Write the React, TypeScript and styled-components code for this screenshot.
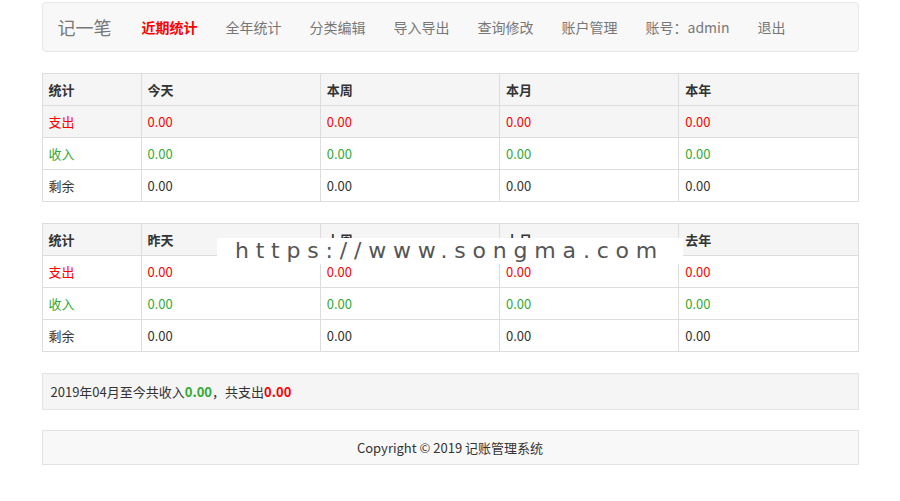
import React from 'react';
import styled, { createGlobalStyle } from 'styled-components';

const GlobalStyle = createGlobalStyle`
  body {
    margin: 0;
    background: #fff;
    font-family: "Noto Sans CJK SC", "Noto Sans", sans-serif;
    font-size: 13px;
    color: #333;
  }
`;

const Page = styled.div`
  position: relative;
  width: 817px;
  margin: 0 auto;
  padding-top: 2px;
  display: flex;
  flex-direction: column;
`;

const NavBar = styled.div`
  height: 48px;
  display: flex;
  align-items: center;
  background: #f8f8f8;
  border: 1px solid #e7e7e7;
  border-radius: 4px;
  padding-left: 15px;
`;

const Brand = styled.span`
  font-size: 18px;
  color: #777;
  margin-right: 16px;
`;

const NavLink = styled.span<{ $active?: boolean }>`
  padding: 0 14px;
  font-size: 14px;
  color: ${(p) => (p.$active ? '#f00' : '#777')};
  font-weight: ${(p) => (p.$active ? 'bold' : 'normal')};
`;

const Table = styled.table`
  width: 100%;
  border-collapse: collapse;
  margin-top: 21px;
  table-layout: fixed;
`;

const Th = styled.th<{ $w?: number }>`
  width: ${(p) => (p.$w ? `${p.$w}px` : 'auto')};
  height: 31px;
  padding: 0 6px;
  text-align: left;
  font-weight: bold;
  border: 1px solid #ddd;
  background: #f5f5f5;
`;

const Tr = styled.tr<{ $grey?: boolean }>`
  background: ${(p) => (p.$grey ? '#f5f5f5' : '#fff')};
`;

const Td = styled.td<{ $color: string }>`
  height: 31px;
  padding: 0 6px;
  border: 1px solid #ddd;
  color: ${(p) => p.$color};
`;

const Summary = styled.div`
  margin-top: 21px;
  height: 35px;
  display: flex;
  align-items: center;
  padding-left: 8px;
  background: #f5f5f5;
  border: 1px solid #e3e3e3;
`;

const Num = styled.b<{ $color: string }>`
  color: ${(p) => p.$color};
`;

const Footer = styled.div`
  margin-top: 20px;
  height: 33px;
  display: flex;
  align-items: center;
  justify-content: center;
  background: #f8f8f8;
  border: 1px solid #e3e3e3;
`;

const Watermark = styled.div`
  position: absolute;
  left: 175px;
  top: 238px;
  width: 466px;
  height: 26px;
  background: #fff;
  color: #555;
  font-family: "DejaVu Sans", sans-serif;
  font-size: 22px;
  letter-spacing: 6.8px;
  line-height: 26px;
  text-align: center;
`;

const rows = [
  { label: '支出', color: '#f00' },
  { label: '收入', color: '#3a3' },
  { label: '剩余', color: '#333' },
];

const StatTable = ({ heads, greyFirst }: { heads: string[]; greyFirst?: boolean }) => (
  <Table>
    <thead>
      <tr>
        <Th $w={86}>统计</Th>
        {heads.map((h) => <Th key={h}>{h}</Th>)}
      </tr>
    </thead>
    <tbody>
      {rows.map((r, i) => (
        <Tr key={r.label} $grey={greyFirst && i === 0}>
          <Td $color={r.color}>{r.label}</Td>
          {heads.map((h) => <Td key={h} $color={r.color}>0.00</Td>)}
        </Tr>
      ))}
    </tbody>
  </Table>
);

const App = () => (
  <Page>
    <GlobalStyle />
    <NavBar>
      <Brand>记一笔</Brand>
      <NavLink $active>近期统计</NavLink>
      <NavLink>全年统计</NavLink>
      <NavLink>分类编辑</NavLink>
      <NavLink>导入导出</NavLink>
      <NavLink>查询修改</NavLink>
      <NavLink>账户管理</NavLink>
      <NavLink>账号：admin</NavLink>
      <NavLink>退出</NavLink>
    </NavBar>
    <StatTable heads={['今天', '本周', '本月', '本年']} greyFirst />
    <StatTable heads={['昨天', '上周', '上月', '去年']} />
    <Summary>
      2019年04月至今共收入<Num $color="#3a3">0.00</Num>，共支出<Num $color="#f00">0.00</Num>
    </Summary>
    <Footer>Copyright © 2019 记账管理系统</Footer>
    <Watermark>https://www.songma.com</Watermark>
  </Page>
);

export default App;
